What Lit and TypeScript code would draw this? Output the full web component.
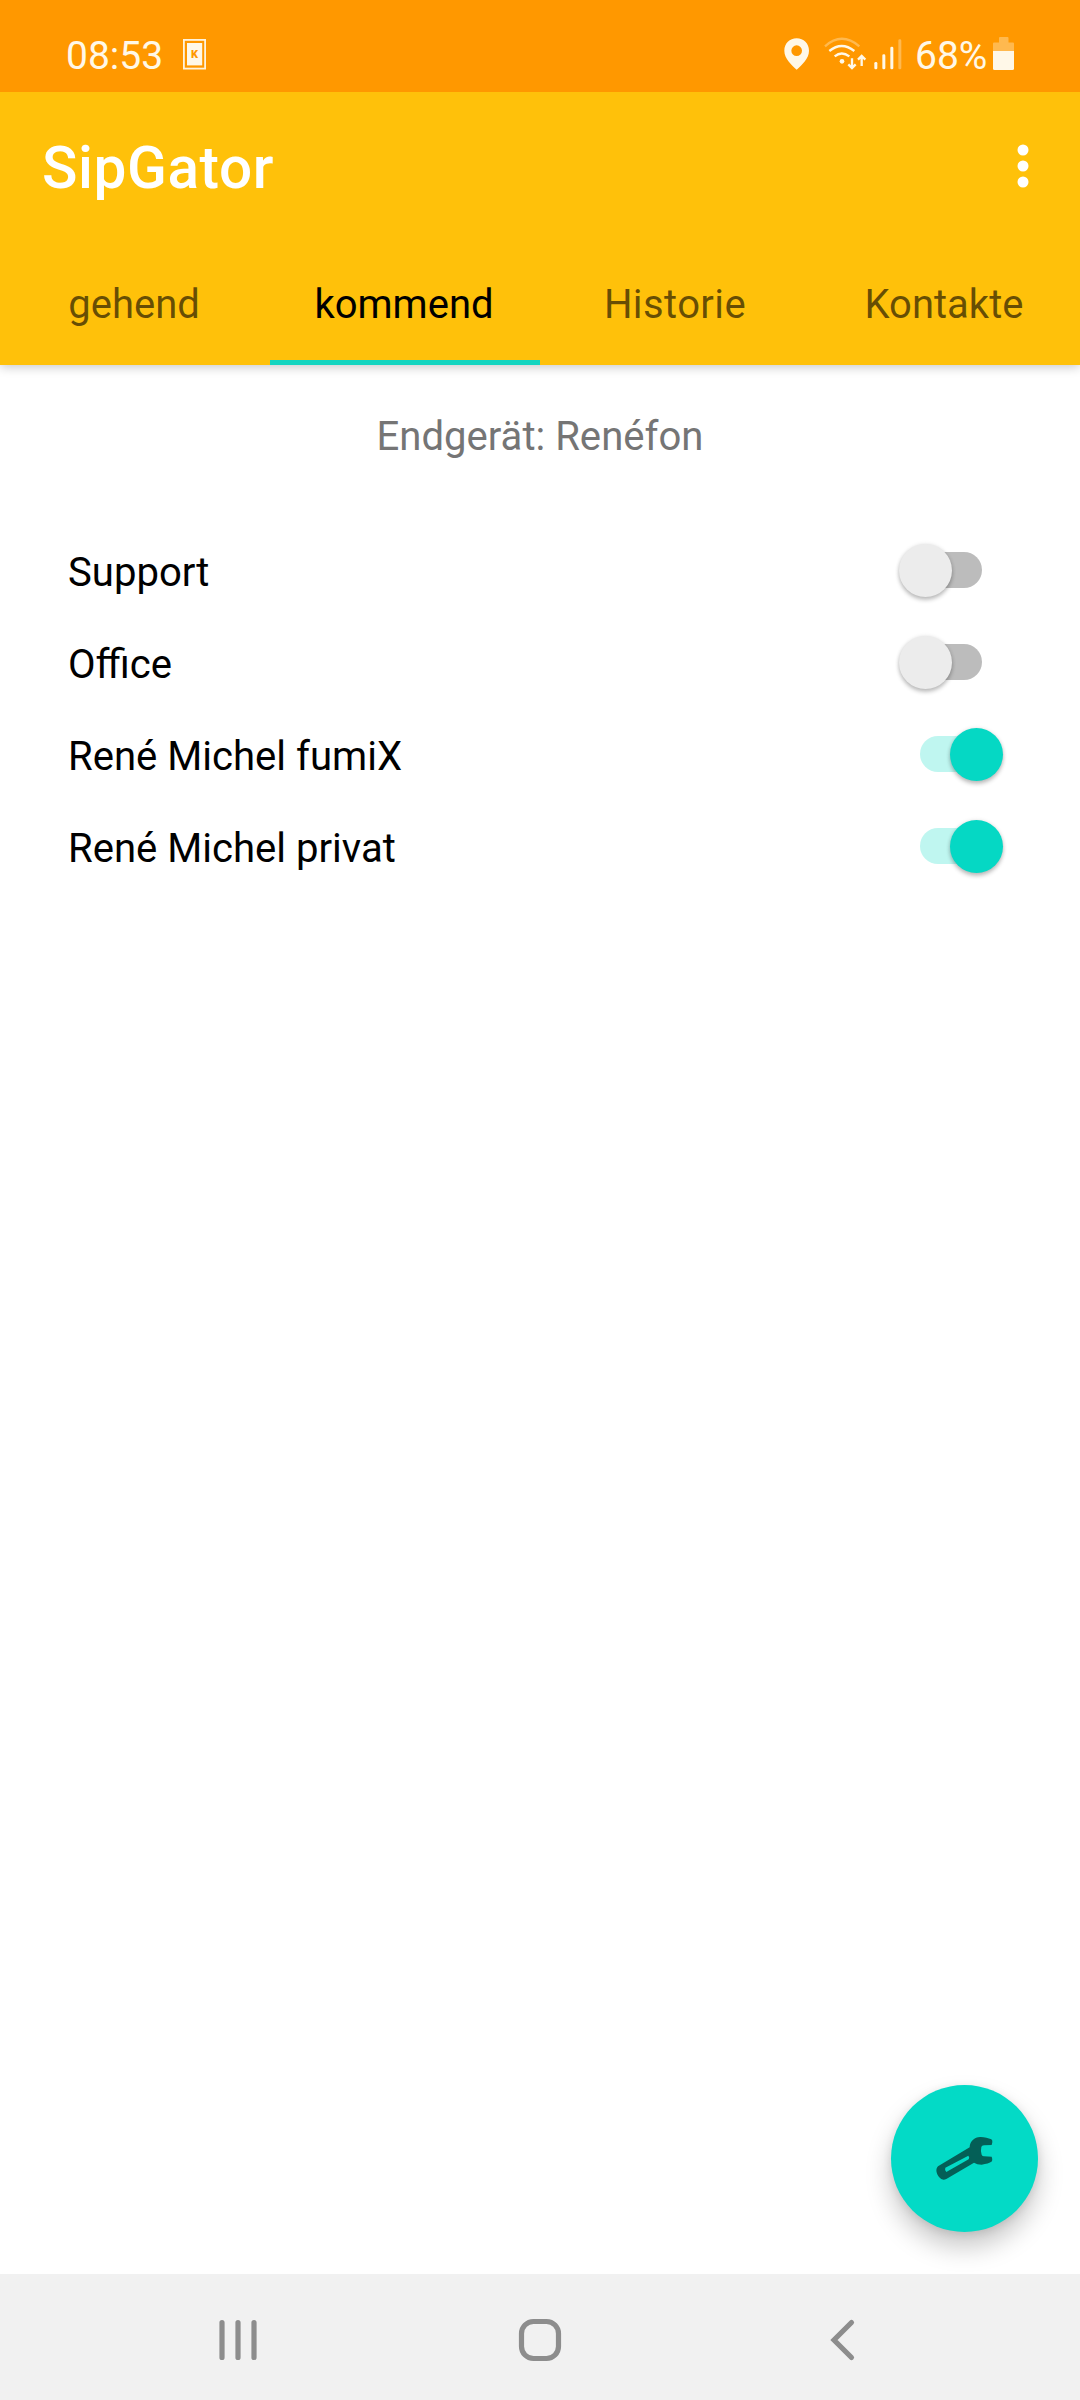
import { LitElement, html, css } from "lit";
import { customElement, property, state } from "lit/decorators.js";
import { classMap } from "lit/directives/class-map.js";

interface Line {
  name: string;
  on: boolean;
}

@customElement("status-bar")
class StatusBar extends LitElement {
  static styles = css`
    :host {
      display: flex;
      align-items: flex-start;
      position: relative;
      z-index: 1;
      box-sizing: border-box;
      height: 92px;
      padding: 0 66px;
      background: #ff9800;
      color: #fff8e8;
      fill: #fff8e8;
      font: 400 39px/40px Roboto, sans-serif;
    }
    svg { display: block; flex: none; }
    .time { width: 117px; margin-top: 36px; }
    .card { margin-top: 39px; }
    .right { display: flex; margin-left: auto; height: 92px; }
    .pin { margin-top: 37px; }
    .wifi { margin: 37px 0 0 14px; }
    .signal { margin: 37px 0 0 7px; }
    .percent { width: 78px; margin: 36px 0 0 13px; }
    .battery { margin-top: 37px; }
    .faded { opacity: 0.34; }
    .arc { fill: none; stroke: #fff8e8; stroke-width: 7; }
    .letter { font: 900 11px Roboto, sans-serif; fill: #ff9800; }
  `;

  render() {
    return html`
      <div class="time">08:53</div>
      <svg class="card" width="23" height="31" viewBox="0 0 23 31">
        <rect x="0.9" y="0.9" width="21.2" height="28.7" fill="none" stroke="#fff3dc" stroke-width="1.8" />
        <rect x="4" y="4" width="15.2" height="22.4" />
        <text class="letter" x="11.6" y="19" text-anchor="middle">K</text>
      </svg>
      <div class="right">
        <svg class="pin" width="26" height="33" viewBox="0 0 78 99">
          <path fill-rule="evenodd" d="M38 4C17 4 1 20 1 41c0 24 22 43 37 57 15-14 37-33 37-57C75 20 59 4 38 4zm0 21a16 16 0 1 1 0 32 16 16 0 0 1 0-32z" />
        </svg>
        <svg class="wifi" width="43" height="34" viewBox="190 51 129 102">
          <path class="arc faded" d="M193 79Q243 34 296 79" />
          <path class="arc" d="M206 93Q243 63 281 93" />
          <path class="arc" d="M222 109Q243 92 266 109" />
          <circle cx="244" cy="124" r="7" />
          <path class="arc" d="M274 115v28M263 133l11 11 11-11" />
          <path class="arc" d="M303 138v-29M292 119l11-11 11 11" />
        </svg>
        <svg class="signal" width="28" height="34" viewBox="341 51 84 102">
          <rect x="342" y="126" width="9" height="22" rx="4" />
          <rect x="366" y="103" width="9" height="45" rx="4" />
          <rect x="390" y="80" width="9" height="68" rx="4" />
          <rect class="faded" x="414" y="58" width="9" height="90" rx="4" />
        </svg>
        <div class="percent">68%</div>
        <svg class="battery" width="21" height="33" viewBox="0 0 21 33">
          <path class="faded" d="M6 5.5V1q0-1 1-1h7.500q1 0 1 1v4.500H20q1 0 1 1V14H0V6.500q0-1 1-1z" />
          <path d="M0 14h21v17.500q0 1.500-1.500 1.500h-18Q0 33 0 31.500z" />
        </svg>
      </div>
    `;
  }
}

@customElement("toggle-switch")
class ToggleSwitch extends LitElement {
  static styles = css`
    :host { display: block; }
    .track {
      position: relative;
      width: 62px;
      height: 36px;
      border-radius: 18px;
      background: #bcbcbc;
    }
    .track.on { background: #bff6f0; }
    .thumb {
      position: absolute;
      left: -21px;
      top: -8px;
      width: 53px;
      height: 53px;
      border-radius: 50%;
      background: #ececec;
      box-shadow: 0 3px 4px rgba(0, 0, 0, 0.24), 0 0 4px rgba(0, 0, 0, 0.1);
    }
    .on .thumb { left: 30px; background: #05d8c4; }
  `;

  @property({ type: Boolean }) on = false;

  render() {
    return html`<div class=${classMap({ track: true, on: this.on })}><div class="thumb"></div></div>`;
  }
}

@customElement("app-root")
export class AppRoot extends LitElement {
  static styles = css`
    :host {
      display: flex;
      flex-direction: column;
      position: relative;
      width: 1080px;
      height: 2400px;
      overflow: hidden;
      background: #fff;
      color: #000;
      font: 400 40.1px/46px Roboto, sans-serif;
    }
    svg { display: block; }
    .appbar {
      flex: none;
      height: 273px;
      background: #ffc10a;
      box-shadow: 0 2px 10px rgba(0, 0, 0, 0.22);
    }
    .toolbar {
      display: flex;
      justify-content: space-between;
      align-items: center;
      height: 147px;
      padding: 0 51.5px 0 42px;
    }
    .title {
      padding-top: 4px;
      color: #fff;
      font-size: 58.5px;
      font-weight: 500;
      line-height: 68px;
      letter-spacing: 0.6px;
    }
    .tabs { display: grid; grid-template-columns: repeat(4, 270px); height: 126px; }
    .tab {
      display: flex;
      justify-content: center;
      align-items: center;
      box-sizing: border-box;
      padding: 11px 2px 5px 0;
      border-bottom: 0 solid #14d5c0;
      color: rgba(0, 0, 0, 0.6);
      font-size: 40px;
    }
    .tab.active { padding-bottom: 0; border-bottom-width: 5px; color: #000; }
    .tab.wide { padding-right: 0; letter-spacing: 0.4px; }
    .content { flex: 1; }
    .device { padding: 49px 0 66px; text-align: center; color: #757575; }
    .row {
      display: flex;
      justify-content: space-between;
      align-items: center;
      height: 92px;
      padding: 0 98px 0 68px;
    }
    .row span { padding-top: 2px; }
    .row toggle-switch { margin-bottom: 4px; }
    .fab {
      position: absolute;
      left: 891px;
      top: 2085px;
      display: flex;
      justify-content: center;
      align-items: center;
      width: 147px;
      height: 147px;
      border-radius: 50%;
      background: #03dac6;
      box-shadow: 0 15px 26px rgba(0, 0, 0, 0.22), 0 2px 8px rgba(0, 0, 0, 0.1);
    }
    .navbar { flex: none; height: 126px; background: #f1f1f1; }
  `;

  @state() private active = 1;
  @state() private lines: Line[] = [
    { name: "Support", on: false },
    { name: "Office", on: false },
    { name: "René Michel fumiX", on: true },
    { name: "René Michel privat", on: true },
  ];

  private tabs = ["gehend", "kommend", "Historie", "Kontakte"];

  private toggle(index: number) {
    this.lines = this.lines.map((l, i) => (i === index ? { ...l, on: !l.on } : l));
  }

  render() {
    return html`
      <status-bar></status-bar>
      <header class="appbar">
        <div class="toolbar">
          <div class="title">SipGator</div>
          <svg width="12" height="44" viewBox="0 0 12 44" fill="#fff">
            <circle cx="6" cy="6" r="5.500" />
            <circle cx="6" cy="22" r="5.500" />
            <circle cx="6" cy="38" r="5.500" />
          </svg>
        </div>
        <nav class="tabs">
          ${this.tabs.map(
            (t, i) => html`<div
              class=${classMap({ tab: true, active: i === this.active, wide: t === "Historie" })}
              @click=${() => (this.active = i)}
            >${t}</div>`
          )}
        </nav>
      </header>
      <main class="content">
        <div class="device">Endgerät: Renéfon</div>
        ${this.lines.map(
          (l, i) => html`<div class="row">
            <span>${l.name}</span>
            <toggle-switch .on=${l.on} @click=${() => this.toggle(i)}></toggle-switch>
          </div>`
        )}
      </main>
      <div class="fab">
        <svg width="59" height="45" viewBox="226 258 177 135">
          <path
            fill="#045f57"
            fill-rule="evenodd"
            d="M330 292C330 273 346 260 363 261C375 261 386 265 395 268Q399 271 398 277L396 285L373 286Q366 286 365 291Q362 303 366 314Q368 319 373 319L396 320Q399 326 397 334Q386 342 366 344Q352 344 343 338L260 387Q247 393 238 381C231 372 226 358 235 349ZM326 317L257 353Q254 360 260 366L327 328Q331 322 326 317Z"
          />
        </svg>
      </div>
      <footer class="navbar">
        <svg width="1080" height="126" viewBox="0 0 1080 126" fill="none" stroke="#8d8d8d" stroke-width="5.200" stroke-linecap="round">
          <path d="M222 48.600v34.800M238 48.600v34.800M254 48.600v34.800" />
          <rect x="521.500" y="47.500" width="37" height="37" rx="12" />
          <path d="M851.500 48.500L834 66l17.500 17.500" />
        </svg>
      </footer>
    `;
  }
}
